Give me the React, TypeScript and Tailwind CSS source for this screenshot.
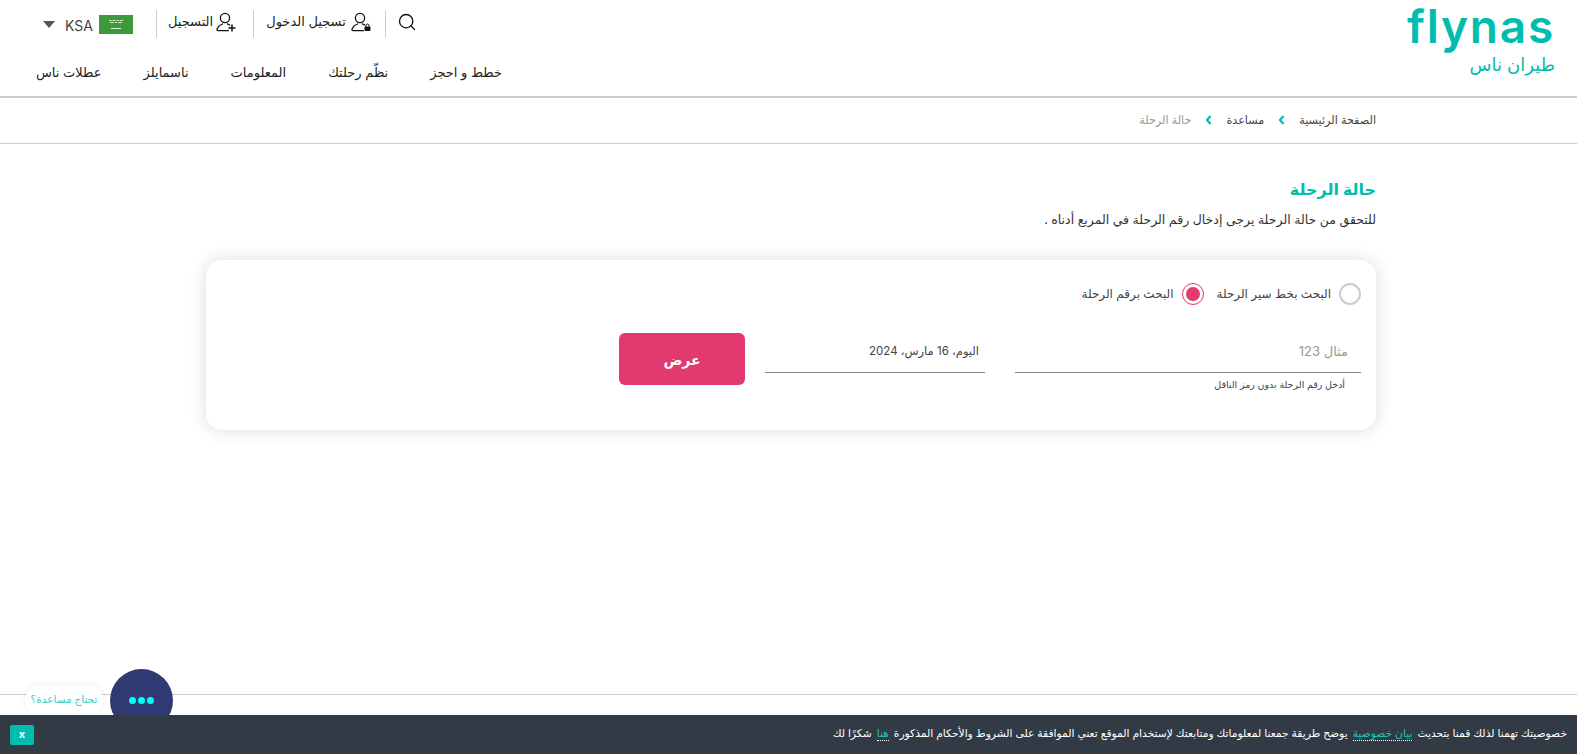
import { Search } from "lucide-react";

const NAV_ITEMS = ["خطط و احجز", "نظّم رحلتك", "المعلومات", "ناسمايلز", "عطلات ناس"];

function UserIcon({ badge }: { badge: "lock" | "plus" }) {
  return (
    <svg width="20" height="20" viewBox="0 0 20 20" fill="none" stroke="#111" strokeWidth="1.3" strokeLinecap="round">
      <circle cx="9" cy="6" r="4.6" />
      <path d="M12.5 18.6H2.2c-1.2 0-1.6-1-1-2 1.2-2.4 3.4-4 5.4-4.6M11.5 12c.8.2 1.5.6 2.2 1" />
      {badge === "lock" ? (
        <g>
          <rect x="13.5" y="14.5" width="6" height="4.6" rx="1" fill="#111" stroke="none" />
          <path d="M15 14.5v-1a1.5 1.5 0 0 1 3 0v1" strokeWidth="1" />
        </g>
      ) : (
        <path d="M16 13v6M13 16h6" strokeWidth="1.5" />
      )}
    </svg>
  );
}

function SaudiFlag() {
  return (
    <svg width="34" height="19" viewBox="0 0 34 19">
      <rect width="34" height="19" fill="#3c9a3a" />
      <path d="M10 5.5h2.5M13.5 5.5h3M17.5 5.5h2M20.5 5.5h3.5M11 7.5h4M16 7.5h2M19 7.5h4" stroke="#cfe6cf" strokeWidth="1.2" />
      <path d="M12 13.5h10" stroke="#e8f3e8" strokeWidth="1" />
    </svg>
  );
}

function Chevron() {
  return (
    <svg width="7" height="10" viewBox="0 0 7 10" fill="none" stroke="#00bdb0" strokeWidth="2.2">
      <path d="M5.5 1 2 5l3.5 4" />
    </svg>
  );
}

export default function App() {
  return (
    <div dir="rtl" className="relative h-[754px] overflow-hidden bg-white font-['Inter','DejaVu_Sans',sans-serif] text-[#333]">
      {/* Header */}
      <header className="flex h-[98px] justify-between border-b-2 border-[#ccc] pr-[20px] pl-[36px]">
        <div className="flex w-[150px] flex-col text-[#00bdb0]">
          <span dir="ltr" className="h-[54px] pt-[3px] text-[46px] leading-[46px] font-semibold tracking-[1.8px] whitespace-nowrap">flynas</span>
          <span className="h-[22px] pr-[2px] text-[18px] leading-[22px] tracking-[0.5px]">طيران ناس</span>
        </div>

        <div className="flex flex-col">
          <div className="flex h-[48px] items-start justify-end pt-[10px] pl-[7px]">
            <div className="flex h-[28px] items-start border-l border-[#ccc] pl-[11px] pt-[2px]">
              <Search size={20} strokeWidth={1.6} color="#111" />
            </div>
            <div className="flex h-[28px] items-start gap-[5px] border-l border-[#ccc] pr-[14px] pl-[12px] pt-[2px] text-[13px] leading-[18px] text-[#222]">
              <UserIcon badge="lock" />
              <span>تسجيل الدخول</span>
            </div>
            <div className="flex h-[28px] items-start gap-[3px] border-l border-[#ccc] pr-[17px] pl-[11px] pt-[2px] text-[13px] leading-[18px] text-[#222]">
              <UserIcon badge="plus" />
              <span>التسجيل</span>
            </div>
            <div className="flex h-[28px] items-center gap-[10px] pr-[23px] pt-[1px] text-[14px] text-[#444]">
              <span className="ml-[-4px]">
                <SaudiFlag />
              </span>
              <span className="pt-[2px]">KSA</span>
              <span className="h-0 w-0 border-x-[6px] border-t-[7px] border-x-transparent border-t-[#555]" />
            </div>
          </div>
          <nav className="flex justify-end gap-[42px] pt-[14px] text-[13px] leading-[20px] text-[#222]">
            {NAV_ITEMS.map((item) => (
              <a key={item}>{item}</a>
            ))}
          </nav>
        </div>
      </header>

      {/* Breadcrumbs */}
      <div className="flex h-[46px] items-center gap-[14px] border-b border-[#ccc] pr-[201px] pb-[1px] text-[11.2px]">
        <span className="text-[#444]">الصفحة الرئيسية</span>
        <Chevron />
        <span className="text-[#444]">مساعدة</span>
        <Chevron />
        <span className="text-[#999]">حالة الرحلة</span>
      </div>

      <main className="pr-[201px] pl-[206px]">
        <h1 className="pt-[33px] text-[16px] leading-[24px] font-bold text-[#00bdb0]">حالة الرحلة</h1>
        <p className="mt-[9px] text-[12.5px] leading-[20px] text-[#333]">للتحقق من حالة الرحلة يرجى إدخال رقم الرحلة في المربع أدناه .</p>

        {/* Search card */}
        <section className="mt-[30px] h-[170px] rounded-[16px] bg-white px-[15px] pt-[23px] shadow-[0_0_18px_rgba(0,0,0,0.14)]">
          <div className="flex items-center gap-[13px] text-[12px] text-[#444]">
            <label className="flex items-center gap-[8px]">
              <span className="h-[22px] w-[22px] rounded-full border-2 border-[#ccc]" />
              <span>البحث بخط سير الرحلة</span>
            </label>
            <label className="flex items-center gap-[8px]">
              <span className="flex h-[22px] w-[22px] items-center justify-center rounded-full border border-[#e23a6e]">
                <span className="h-[14px] w-[14px] rounded-full bg-[#e23a6e]" />
              </span>
              <span>البحث برقم الرحلة</span>
            </label>
          </div>

          <div className="mt-[27px] flex items-start">
            <div className="w-[346px]">
              <div className="flex h-[41px] items-center border-b border-[#888] pr-[13px] text-[13px] text-[#999]">مثال 123</div>
              <p className="pt-[5px] pr-[16px] text-[9.5px] leading-[14px] text-[#345]">أدخل رقم الرحلة بدون رمز الناقل</p>
            </div>
            <div className="mr-[30px] flex h-[41px] w-[220px] items-center border-b border-[#888] pr-[6px] text-[11.5px] text-[#444]">اليوم، 16 مارس، 2024</div>
            <button className="mt-[1px] mr-[20px] h-[52px] w-[126px] rounded-[6px] bg-[#e23a6e] text-[14px] font-bold text-white">عرض</button>
          </div>
        </section>
      </main>

      {/* Footer rule */}
      <div className="mt-[264px] border-t border-[#ccc]" />

      {/* Chat widget */}
      <div className="absolute top-[669px] left-[110px] flex h-[63px] w-[63px] items-center justify-center gap-[2px] rounded-full bg-[#2f3a73]">
        <span className="h-[7px] w-[7px] rounded-full bg-[#0ff]" />
        <span className="h-[7px] w-[7px] rounded-full bg-[#0ff]" />
        <span className="h-[7px] w-[7px] rounded-full bg-[#0ff]" />
      </div>
      <div className="absolute top-[685px] left-[25px] flex h-[30px] w-[78px] items-center justify-center rounded-full bg-white text-[10.5px] text-[#33cfc4] shadow-[0_0_6px_rgba(0,0,0,0.08)]">
        تحتاج مساعدة؟
      </div>

      {/* Cookie bar */}
      <div className="absolute inset-x-0 bottom-0 flex h-[39px] items-center justify-between bg-[#323a45] pr-[10px] pl-[10px] text-[10.7px] text-white">
        <p>
          خصوصيتك تهمنا لذلك قمنا بتحديث{" "}
          <a className="mx-[2px] border-b border-dotted border-white text-[#1cc4b8]">بيان خصوصية</a>{" "}
          يوضح طريقة جمعنا لمعلوماتك ومتابعتك لإستخدام الموقع تعني الموافقة على الشروط والأحكام المذكورة{" "}
          <a className="mx-[2px] border-b border-dotted border-white text-[#1cc4b8]">هنا</a>{" "}
          شكرًا لك
        </p>
        <button className="flex h-[20px] w-[24px] items-center justify-center rounded-[2px] bg-[#00bdb0] text-[11px] font-bold text-white">x</button>
      </div>
    </div>
  );
}
